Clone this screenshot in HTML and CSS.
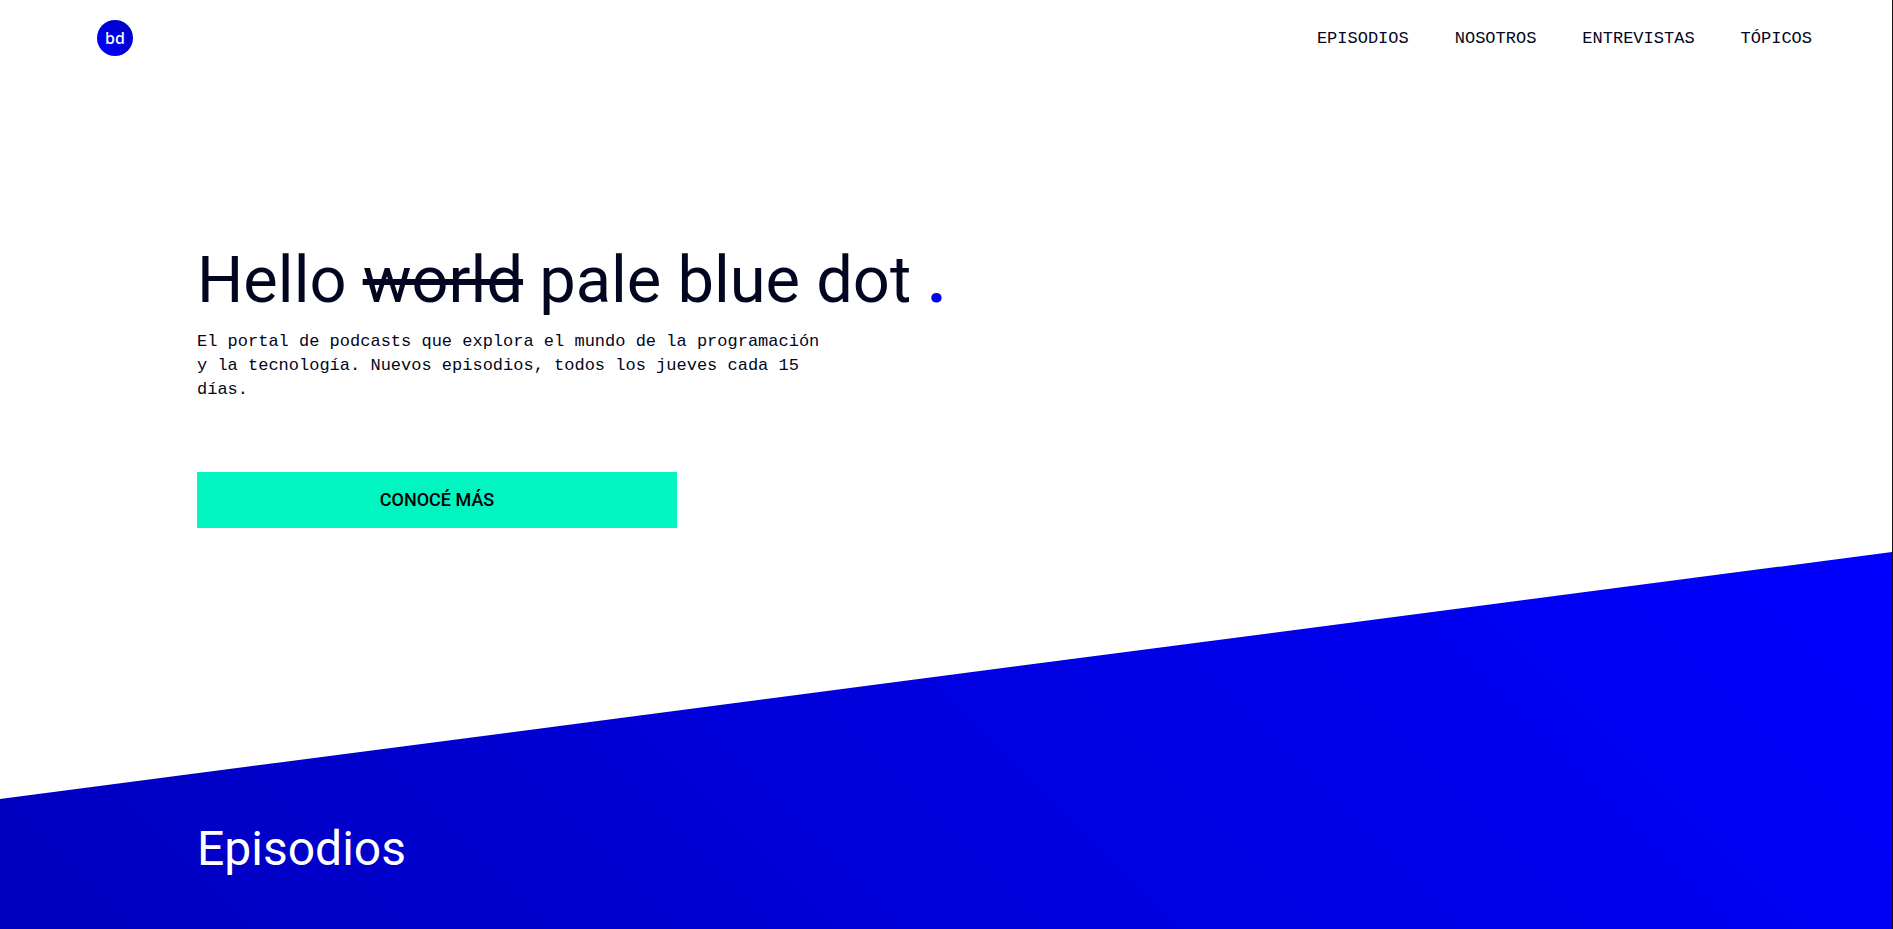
FILE: index.html
```html
<!DOCTYPE html>
<html lang="es">
<head>
  <meta charset="utf-8">
  <meta name="viewport" content="width=device-width, initial-scale=1">
  <title>Pale blue dot</title>
  <link rel="stylesheet" href="styles.css">
</head>
<body>
  <header class="header">
    <a class="logo" href="#" aria-label="Inicio">
      <svg viewBox="0 0 36 36" aria-hidden="true">
        <defs>
          <linearGradient id="dot" x1="1" y1="0" x2="0" y2="1">
            <stop offset="0" stop-color="#0000c0"/>
            <stop offset="1" stop-color="#0000ff"/>
          </linearGradient>
        </defs>
        <circle cx="18" cy="18" r="18" fill="url(#dot)"/>
        <text class="logo-text" x="18" y="24" text-anchor="middle">bd</text>
      </svg>
    </a>
    <nav class="nav">
      <a href="#episodios">EPISODIOS</a>
      <a href="#nosotros">NOSOTROS</a>
      <a href="#entrevistas">ENTREVISTAS</a>
      <a href="#topicos">TÓPICOS</a>
    </nav>
  </header>
  <main class="main">
    <section class="hero">
      <h1 class="title">Hello <s>world</s> pale blue dot <span class="point">.</span></h1>
      <p class="intro">El portal de podcasts que explora el mundo de la programación y la tecnología. Nuevos episodios, todos los jueves cada 15 días.</p>
      <button class="cta" type="button">CONOCÉ MÁS</button>
    </section>
    <section class="episodes" id="episodios">
      <h2 class="subtitle">Episodios</h2>
    </section>
  </main>
</body>
</html>
```
FILE: styles.css
```css
* {
  box-sizing: border-box;
}

body {
  display: flex;
  flex-direction: column;
  min-height: 100vh;
  margin: 0;
  border-right: 1px solid #1a0d18;
  background: #fff;
  color: #030620;
  font-family: Roboto, "Noto Sans", sans-serif;
}

.header {
  display: flex;
  align-items: center;
  justify-content: space-between;
  padding: 20px 80px 20px 97px;
}

.logo,
.logo svg {
  display: block;
  width: 36px;
  height: 36px;
}

.logo-text {
  fill: #fff;
  font: 500 16px "Noto Sans", sans-serif;
}

.nav {
  display: flex;
  gap: 46px;
  padding-top: 2px;
  font: 17px/24px "Liberation Mono", monospace;
}

.nav a {
  color: inherit;
  text-decoration: none;
}

.main {
  display: flex;
  flex: 1;
  flex-direction: column;
}

.hero {
  padding: 162px 197px 24px;
}

.title {
  margin: 0;
  font-size: 65px;
  font-weight: 400;
  line-height: 84px;
}

.title s {
  text-decoration-thickness: 6px;
}

.point {
  color: #0000f0;
  font-weight: 700;
}

.intro {
  max-width: 640px;
  margin: 8px 0 70px;
  font: 17px/24px "Liberation Mono", monospace;
}

.cta {
  display: block;
  width: 100%;
  max-width: 480px;
  height: 56px;
  border: 0;
  background: #00f5c0;
  color: #000;
  font: 500 18px/24px Roboto, "Noto Sans", sans-serif;
}

.episodes {
  flex: 1;
  padding: 265px 197px 48px;
  background: linear-gradient(45deg, #0000be, #0000ff);
  clip-path: polygon(0 247px, 100% 0, 100% 100%, 0 100%);
  color: #fff;
}

.subtitle {
  margin: 0;
  font-size: 48px;
  font-weight: 400;
  line-height: 64px;
}
```
